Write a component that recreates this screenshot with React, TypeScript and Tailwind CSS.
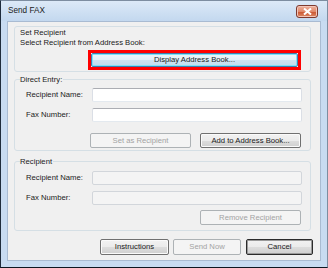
const btnBase =
  "flex items-center justify-center rounded-[2px] border text-[7.7px] leading-none";
const btnNormal =
  "border-[#707070] text-[#1a1a1a] bg-[linear-gradient(#f2f2f2_0%,#ebebeb_50%,#dddddd_51%,#cfcfcf_100%)] shadow-[inset_0_0_0_1px_#fafafa]";
const btnDisabled = "border-[#adb2b5] text-[#a3a3a3] bg-[#f4f4f4]";

function Field({ label, disabled }: { label: string; disabled?: boolean }) {
  return (
    <div className="flex items-center">
      <span className="w-[66px] pl-[11px] box-content text-[7.7px] leading-none text-[#1a1a1a]">{label}</span>
      <div
        className={
          disabled
            ? "h-[14px] w-[210px] rounded-[2px] border border-[#d2d6db] bg-[#f4f4f4]"
            : "h-[14px] w-[210px] rounded-[2px] border border-[#abadb3] border-b-[#e3e9ef] border-x-[#dbdfe6] bg-white"
        }
      />
    </div>
  );
}

export default function App() {
  return (
    <div className="flex h-[268px] w-[328px] flex-col border border-[#7d8da0] border-l-[#1f2c3c] border-b-[#0d1620] bg-[#c8dbf1] font-['Liberation_Sans',Arial,sans-serif]">
      {/* title bar */}
      <div className="flex h-[20px] shrink-0 items-center justify-between bg-[linear-gradient(#dce9f7,#c3d8ef)] pl-[7px] pr-[9px]">
        <span className="text-[8.2px] text-[#1a1a1a]">Send FAX</span>
        <div className="flex h-[13px] w-[22px] items-center justify-center rounded-[3px] border border-[#7e3a2e] bg-[linear-gradient(#eeb29e_0%,#e08a6c_50%,#c9532f_51%,#dc8a66_100%)] shadow-[inset_0_0_0_1px_#f3c5b8]">
          <svg width="9" height="7" viewBox="0 0 9 7">
            <path d="M1 0.5 L8 6.5 M8 0.5 L1 6.5" stroke="#ffffff" strokeWidth="2" />
          </svg>
        </div>
      </div>

      {/* client area */}
      <div className="mx-[6px] mb-[6px] flex flex-1 flex-col border border-[#a9bbd2] bg-[#f0f0f0] pl-[6px]">
        {/* Set Recipient */}
        <div className="mt-[4px] h-[46px] w-[297px] shrink-0 rounded-[3px] border border-[#d5dfe5] pl-[5px] pt-[1px] text-[7.7px] leading-[10px] text-[#1a1a1a]">
          <div>Set Recipient</div>
          <div>Select Recipient from Address Book:</div>
          <div className="ml-[68px] mt-[2px] h-[20px] w-[213px] border-[3px] border-[#ff0000] bg-white">
            <div className={btnBase + " h-full w-full border-[#3c7fb1] text-[#1a1a1a] bg-[linear-gradient(#eef5fa_0%,#e2eef6_50%,#cfe4f2_51%,#c2dcee_100%)] shadow-[inset_0_0_0_1px_#7fe2f8]"}>
              Display Address Book...
            </div>
          </div>
        </div>

        {/* Direct Entry */}
        <div className="relative mt-[7px] h-[72px] w-[297px] shrink-0 rounded-[3px] border border-[#d5dfe5]">
          <span className="absolute left-[5px] top-[-5px] bg-[#f0f0f0] pr-[1px] text-[7.7px] leading-[10px] text-[#1a1a1a]">
            Direct Entry:
          </span>
          <div className="mt-[8px] flex flex-col gap-[6px]">
            <Field label="Recipient Name:" />
            <Field label="Fax Number:" />
          </div>
          <div className="ml-[75px] mt-[11px] flex gap-[9px]">
            <div className={btnBase + " h-[15px] w-[101px] " + btnDisabled}>Set as Recipient</div>
            <div className={btnBase + " h-[15px] w-[101px] " + btnNormal}>Add to Address Book...</div>
          </div>
        </div>

        {/* Recipient */}
        <div className="relative mt-[10px] h-[70px] w-[297px] shrink-0 rounded-[3px] border border-[#d5dfe5]">
          <span className="absolute left-[5px] top-[-5px] bg-[#f0f0f0] pr-[1px] text-[7.7px] leading-[10px] text-[#1a1a1a]">
            Recipient
          </span>
          <div className="mt-[9px] flex flex-col gap-[6px]">
            <Field label="Recipient Name:" disabled />
            <Field label="Fax Number:" disabled />
          </div>
          <div className="ml-[185px] mt-[5px] flex">
            <div className={btnBase + " h-[15px] w-[101px] " + btnDisabled}>Remove Recipient</div>
          </div>
        </div>

        {/* bottom buttons */}
        <div className="mt-[8px] flex justify-end gap-[4px] pr-[7px]">
          <div className={btnBase + " h-[16px] w-[69px] " + btnNormal}>Instructions</div>
          <div className={btnBase + " h-[16px] w-[68px] " + btnDisabled}>Send Now</div>
          <div className={btnBase + " ml-[1px] h-[16px] w-[67px] border-[#2b2b2b] text-[#1a1a1a] bg-[linear-gradient(#f2f2f2_0%,#ebebeb_50%,#dddddd_51%,#cfcfcf_100%)] shadow-[inset_0_0_0_1px_#9a9a9a]"}>
            Cancel
          </div>
        </div>
      </div>
    </div>
  );
}
